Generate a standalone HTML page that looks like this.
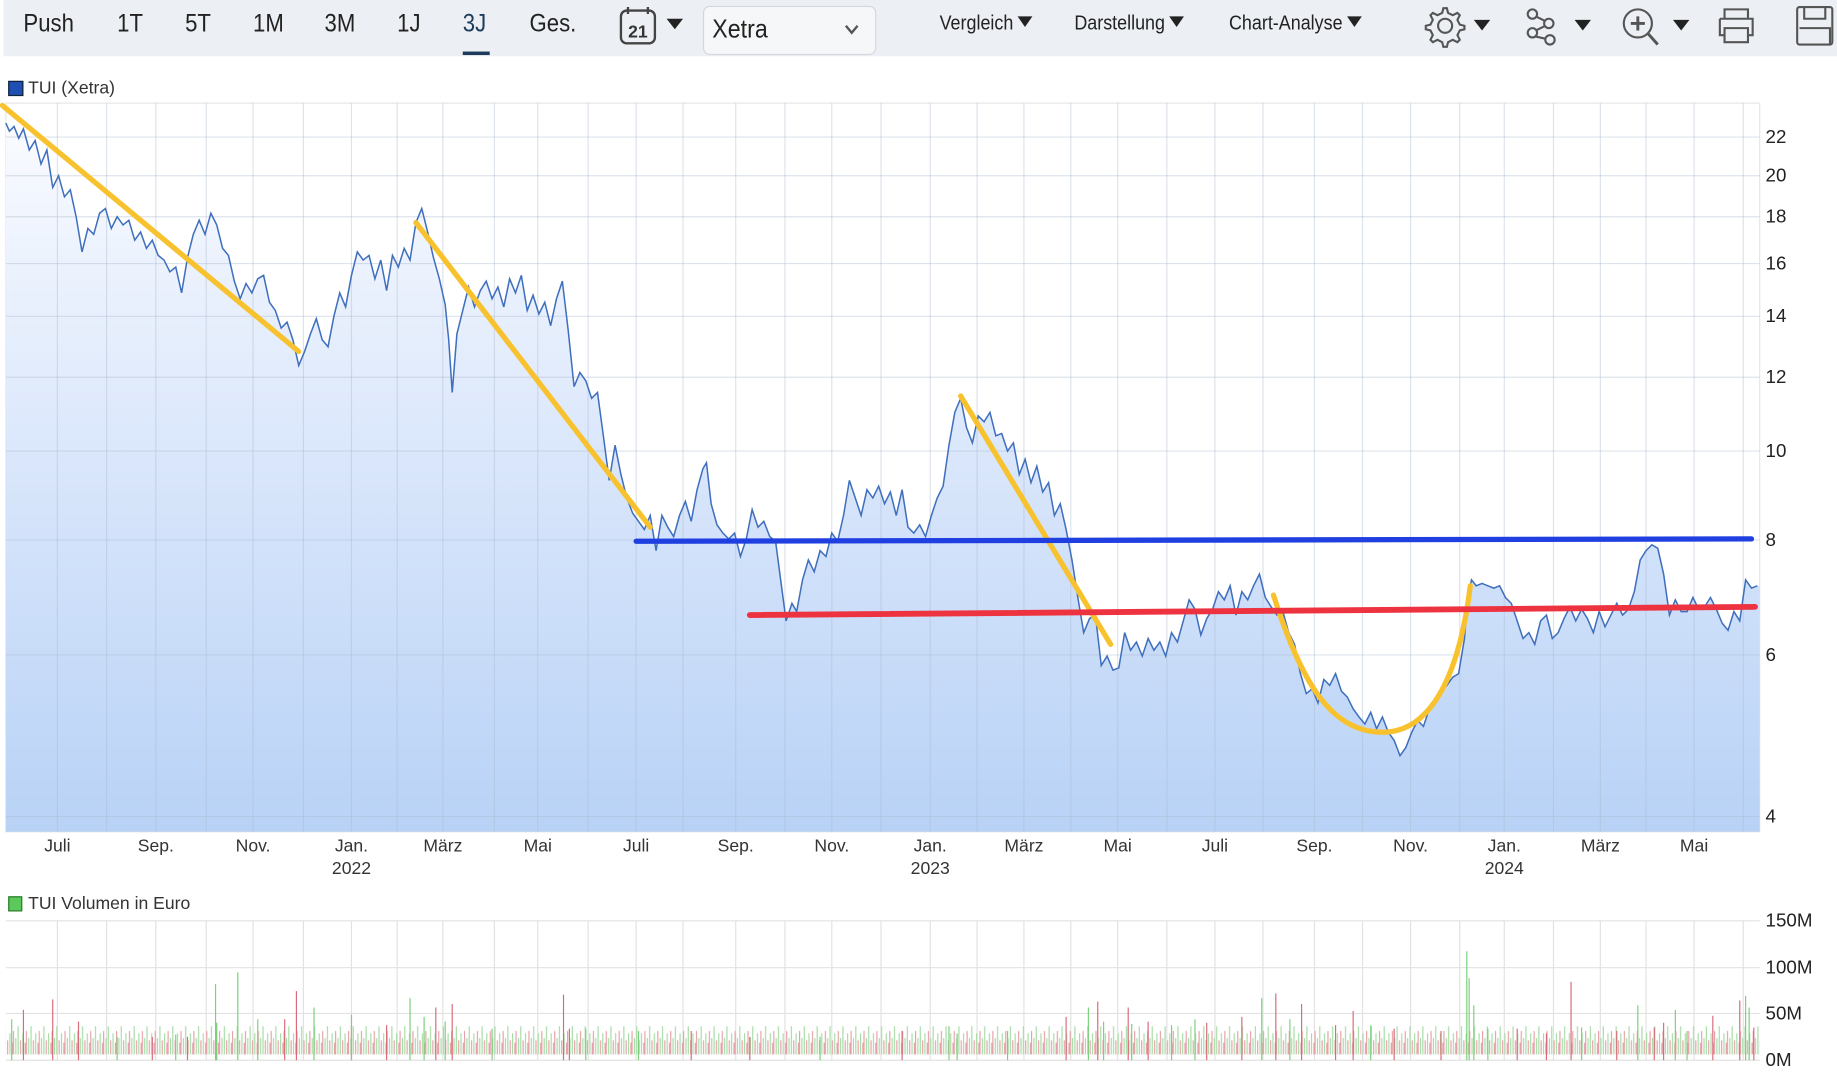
<!DOCTYPE html>
<html><head><meta charset="utf-8">
<style>
html,body{margin:0;padding:0;width:1837px;height:1075px;overflow:hidden;background:#fff;}
#w{position:absolute;left:0;top:0;width:1568px;height:918px;transform:scale(1.17156);transform-origin:0 0;font-family:"Liberation Sans",sans-serif;color:#222;}
.tb{position:absolute;left:3px;top:0;width:1565px;height:48px;background:#eceff3;}
.t{position:absolute;top:9px;font-size:21px;color:#222;font-family:"Liberation Sans",sans-serif;transform:scaleX(.9);transform-origin:0 0;}
.m{position:absolute;top:10px;font-size:17px;color:#222;transform:scaleX(.9);transform-origin:0 0;}
.tri{display:inline-block;width:0;height:0;border-left:7px solid transparent;border-right:7px solid transparent;border-top:9px solid #222;margin-left:4px;vertical-align:2px;}
.lab{position:absolute;font-size:15px;color:#333;}
.xl{position:absolute;top:713px;font-size:15px;color:#333;transform:translateX(-50%);text-align:center;line-height:19px;}
.yl{position:absolute;left:1507px;font-size:16px;color:#222;}
</style></head><body><div id="w">
<div class="tb"></div>
<div class="t" style="left:20px">Push</div>
<div class="t" style="left:100px">1T</div>
<div class="t" style="left:158px">5T</div>
<div class="t" style="left:216px">1M</div>
<div class="t" style="left:277px">3M</div>
<div class="t" style="left:339px">1J</div>
<div class="t" style="left:395px;color:#1d3c5c">3J</div>
<div style="position:absolute;left:395px;top:44px;width:23px;height:3px;background:#1d3c5c"></div>
<div class="t" style="left:452px">Ges.</div>
<svg style="position:absolute;left:526px;top:4px" width="62" height="36" viewBox="0 0 62 36">
<rect x="4" y="5" width="29" height="28" rx="5" fill="none" stroke="#444" stroke-width="2"/>
<line x1="10" y1="2" x2="10" y2="8" stroke="#444" stroke-width="2"/><line x1="27" y1="2" x2="27" y2="8" stroke="#444" stroke-width="2"/>
<text x="18.5" y="28" font-size="15" font-weight="bold" text-anchor="middle" fill="#333" font-family="Liberation Sans">21</text>
<path d="M43 12 L57 12 L50 21Z" fill="#222"/></svg>
<div style="position:absolute;left:600px;top:5px;width:146px;height:40px;background:#f6f7f9;border:1px solid #d4d7dc;border-radius:6px;"></div>
<div style="position:absolute;left:608px;top:12px;font-size:22px;color:#222;transform:scaleX(.9);transform-origin:0 0">Xetra</div>
<svg style="position:absolute;left:720px;top:20px" width="14" height="10"><path d="M2 2 L7 8 L12 2" fill="none" stroke="#555" stroke-width="2"/></svg>
<div class="m" style="left:802px">Vergleich<span class="tri"></span></div>
<div class="m" style="left:917px">Darstellung<span class="tri"></span></div>
<div class="m" style="left:1049px">Chart-Analyse<span class="tri"></span></div>
<svg style="position:absolute;left:1212px;top:2px" width="356" height="40" viewBox="0 0 356 40">
<g fill="none" stroke="#555" stroke-width="1.8">
<path d="M20 5 l3 0 1 4 4 2 4-2 2 2-2 4 2 4 4 1 0 3-4 1-2 4 2 4-2 2-4-2-4 2-1 4-3 0-1-4-4-2-4 2-2-2 2-4-2-4-4-1 0-3 4-1 2-4-2-4 2-2 4 2 4-2z"/>
<circle cx="21.5" cy="20" r="6"/>
<circle cx="96" cy="10" r="4"/><circle cx="96" cy="26" r="4"/><circle cx="110" cy="18" r="4"/><circle cx="111" cy="32" r="4"/>
<path d="M99 12 L107 16 M99 24 L107 20 M98 29 L107 31"/>
<circle cx="186" cy="18" r="12"/><path d="M195 27 L203 36 M186 12 L186 24 M180 18 L192 18" stroke-width="2.5"/>
<path d="M260 14 V6 h20 v8 M256 14 h28 v14 h-4 M256 14 v14 h4 M260 22 h20 v12 h-20z"/>
<rect x="322" y="4" width="30" height="32" rx="2"/><path d="M328 4 v10 h18 v-10 M324 22 h26 v14"/>
</g>
<path d="M46 15 h14 l-7 9z M132 15 h14 l-7 9z M216 15 h14 l-7 9z" fill="#222"/>
</svg>

<div style="position:absolute;left:7px;top:69px;width:11px;height:11px;background:#1f4fb5;border:1px solid #123"></div>
<div class="lab" style="left:24px;top:67px">TUI (Xetra)</div>

<svg style="position:absolute;left:0;top:0" width="1568" height="918">
<defs>
<linearGradient id="g" x1="0" y1="88" x2="0" y2="710" gradientUnits="userSpaceOnUse">
<stop offset="0" stop-color="#fbfcff"/><stop offset="0.5" stop-color="#d9e6fb"/><stop offset="1" stop-color="#b8d2f6"/></linearGradient>
</defs>
<rect x="5" y="88" width="1497" height="622" fill="#fff" stroke="#e6e6e6"/>
<path id="p" d="M5,105 L8,112 L12,108 L16,118 L20,110 L25,128 L30,120 L35,140 L40,128 L45,160 L50,150 L55,168 L60,162 L65,185 L70,215 L75,195 L80,200 L85,182 L90,178 L95,195 L100,185 L105,192 L110,188 L115,205 L120,198 L125,212 L130,205 L135,218 L140,222 L145,232 L150,228 L155,250 L160,220 L165,200 L170,188 L175,200 L180,182 L185,192 L190,212 L195,218 L200,240 L205,255 L210,242 L215,250 L220,238 L225,235 L230,258 L235,265 L240,280 L245,275 L250,290 L255,312 L260,300 L265,285 L270,272 L275,290 L280,296 L285,270 L290,250 L295,262 L300,235 L305,215 L310,222 L315,218 L320,238 L325,222 L330,248 L335,218 L340,228 L345,212 L350,222 L355,190 L360,178 L365,198 L370,220 L375,238 L380,260 L383,290 L386,335 L390,285 L395,265 L400,245 L405,262 L410,248 L415,240 L420,255 L425,245 L430,262 L435,238 L440,250 L445,235 L450,265 L455,252 L460,268 L465,258 L470,278 L475,255 L480,240 L485,282 L490,330 L495,318 L500,325 L505,340 L510,335 L515,372 L520,410 L525,380 L530,405 L535,425 L540,438 L545,445 L550,452 L555,440 L560,470 L565,440 L570,450 L575,458 L580,440 L585,428 L590,445 L595,418 L600,400 L603,395 L607,430 L612,448 L617,455 L622,460 L627,455 L632,475 L637,460 L642,435 L647,450 L652,445 L657,458 L662,462 L667,500 L671,530 L676,515 L680,522 L685,495 L690,478 L695,488 L700,470 L705,475 L710,455 L715,462 L720,440 L725,410 L730,425 L735,440 L740,418 L745,425 L750,415 L755,430 L760,420 L765,440 L770,418 L775,450 L780,455 L785,448 L790,458 L795,440 L800,425 L805,415 L810,380 L815,352 L820,340 L825,365 L830,378 L835,355 L840,360 L845,352 L850,372 L855,370 L860,385 L865,378 L870,405 L875,392 L880,412 L885,398 L890,420 L895,412 L900,440 L905,430 L910,452 L915,478 L920,510 L925,540 L930,528 L935,525 L940,568 L945,560 L950,572 L955,570 L960,540 L965,555 L970,548 L975,560 L980,545 L985,555 L990,548 L995,560 L1000,540 L1005,548 L1010,530 L1015,512 L1020,520 L1025,542 L1030,528 L1035,520 L1040,505 L1045,512 L1050,500 L1055,525 L1060,505 L1065,512 L1070,500 L1075,490 L1080,510 L1085,518 L1090,525 L1095,522 L1100,540 L1105,550 L1110,575 L1115,592 L1120,588 L1125,600 L1130,580 L1135,585 L1140,575 L1145,590 L1150,595 L1155,605 L1160,612 L1165,618 L1170,608 L1175,622 L1180,612 L1185,625 L1190,632 L1195,645 L1200,638 L1205,625 L1210,615 L1215,620 L1220,605 L1225,600 L1230,590 L1235,585 L1240,578 L1245,575 L1250,545 L1253,510 L1256,495 L1260,500 L1265,498 L1270,500 L1275,502 L1280,500 L1285,510 L1290,515 L1295,530 L1300,545 L1305,540 L1310,550 L1315,530 L1320,525 L1325,545 L1330,540 L1335,528 L1340,518 L1345,530 L1350,520 L1355,528 L1360,540 L1365,522 L1370,535 L1375,525 L1380,515 L1385,525 L1390,520 L1395,505 L1400,478 L1405,470 L1410,465 L1415,468 L1420,490 L1425,525 L1430,512 L1435,522 L1440,522 L1445,510 L1450,520 L1455,518 L1460,510 L1465,520 L1470,532 L1475,538 L1480,522 L1485,530 L1490,495 L1495,502 L1500,500"
 fill="none"/>
<path d="M5,105 L8,112 L12,108 L16,118 L20,110 L25,128 L30,120 L35,140 L40,128 L45,160 L50,150 L55,168 L60,162 L65,185 L70,215 L75,195 L80,200 L85,182 L90,178 L95,195 L100,185 L105,192 L110,188 L115,205 L120,198 L125,212 L130,205 L135,218 L140,222 L145,232 L150,228 L155,250 L160,220 L165,200 L170,188 L175,200 L180,182 L185,192 L190,212 L195,218 L200,240 L205,255 L210,242 L215,250 L220,238 L225,235 L230,258 L235,265 L240,280 L245,275 L250,290 L255,312 L260,300 L265,285 L270,272 L275,290 L280,296 L285,270 L290,250 L295,262 L300,235 L305,215 L310,222 L315,218 L320,238 L325,222 L330,248 L335,218 L340,228 L345,212 L350,222 L355,190 L360,178 L365,198 L370,220 L375,238 L380,260 L383,290 L386,335 L390,285 L395,265 L400,245 L405,262 L410,248 L415,240 L420,255 L425,245 L430,262 L435,238 L440,250 L445,235 L450,265 L455,252 L460,268 L465,258 L470,278 L475,255 L480,240 L485,282 L490,330 L495,318 L500,325 L505,340 L510,335 L515,372 L520,410 L525,380 L530,405 L535,425 L540,438 L545,445 L550,452 L555,440 L560,470 L565,440 L570,450 L575,458 L580,440 L585,428 L590,445 L595,418 L600,400 L603,395 L607,430 L612,448 L617,455 L622,460 L627,455 L632,475 L637,460 L642,435 L647,450 L652,445 L657,458 L662,462 L667,500 L671,530 L676,515 L680,522 L685,495 L690,478 L695,488 L700,470 L705,475 L710,455 L715,462 L720,440 L725,410 L730,425 L735,440 L740,418 L745,425 L750,415 L755,430 L760,420 L765,440 L770,418 L775,450 L780,455 L785,448 L790,458 L795,440 L800,425 L805,415 L810,380 L815,352 L820,340 L825,365 L830,378 L835,355 L840,360 L845,352 L850,372 L855,370 L860,385 L865,378 L870,405 L875,392 L880,412 L885,398 L890,420 L895,412 L900,440 L905,430 L910,452 L915,478 L920,510 L925,540 L930,528 L935,525 L940,568 L945,560 L950,572 L955,570 L960,540 L965,555 L970,548 L975,560 L980,545 L985,555 L990,548 L995,560 L1000,540 L1005,548 L1010,530 L1015,512 L1020,520 L1025,542 L1030,528 L1035,520 L1040,505 L1045,512 L1050,500 L1055,525 L1060,505 L1065,512 L1070,500 L1075,490 L1080,510 L1085,518 L1090,525 L1095,522 L1100,540 L1105,550 L1110,575 L1115,592 L1120,588 L1125,600 L1130,580 L1135,585 L1140,575 L1145,590 L1150,595 L1155,605 L1160,612 L1165,618 L1170,608 L1175,622 L1180,612 L1185,625 L1190,632 L1195,645 L1200,638 L1205,625 L1210,615 L1215,620 L1220,605 L1225,600 L1230,590 L1235,585 L1240,578 L1245,575 L1250,545 L1253,510 L1256,495 L1260,500 L1265,498 L1270,500 L1275,502 L1280,500 L1285,510 L1290,515 L1295,530 L1300,545 L1305,540 L1310,550 L1315,530 L1320,525 L1325,545 L1330,540 L1335,528 L1340,518 L1345,530 L1350,520 L1355,528 L1360,540 L1365,522 L1370,535 L1375,525 L1380,515 L1385,525 L1390,520 L1395,505 L1400,478 L1405,470 L1410,465 L1415,468 L1420,490 L1425,525 L1430,512 L1435,522 L1440,522 L1445,510 L1450,520 L1455,518 L1460,510 L1465,520 L1470,532 L1475,538 L1480,522 L1485,530 L1490,495 L1495,502 L1500,500 L1502,500 L1502,710 L5,710 Z" fill="url(#g)"/>
<g stroke="#a9b8cc" stroke-opacity="0.4" stroke-width="1">
<path d="M49 88V710 M91 88V710 M133 88V710 M176 88V710 M216 88V710 M259 88V710 M300 88V710 M339 88V710 M378 88V710 M422 88V710 M459 88V710 M502 88V710 M543 88V710 M583 88V710 M628 88V710 M670 88V710 M710 88V710 M752 88V710 M794 88V710 M834 88V710 M874 88V710 M914 88V710 M954 88V710 M996 88V710 M1037 88V710 M1078 88V710 M1122 88V710 M1163 88V710 M1204 88V710 M1246 88V710 M1284 88V710 M1326 88V710 M1366 88V710 M1405 88V710 M1446 88V710 M1488 88V710"/>
<path d="M5 117H1502 M5 150H1502 M5 185H1502 M5 225H1502 M5 270H1502 M5 322H1502 M5 385H1502 M5 461H1502 M5 559H1502 M5 697H1502"/>
</g>
<use href="#p" stroke="#3f6fbd" stroke-width="1.3"/>
<g fill="none" stroke-linecap="round" stroke-width="4.5">
<path d="M2 90 L255 300 M355 190 L555 450 M820 338 L948 550" stroke="#f8c22f"/>
<path d="M1087 508 C1110 580 1135 625 1180 625 C1220 625 1245 580 1255 500" stroke="#f8c22f"/>
<path d="M543 462 L1495 460" stroke="#1f3fe0"/>
<path d="M640 525 L1498 518" stroke="#ee3340" stroke-width="5"/>
</g>
<!-- volume -->
<g stroke="#e2e2e2" stroke-width="1">
<path d="M5 786H1502 M5 826H1502 M5 865H1502 M5 905H1502"/>
<path d="M49 786V905 M91 786V905 M133 786V905 M176 786V905 M216 786V905 M259 786V905 M300 786V905 M339 786V905 M378 786V905 M422 786V905 M459 786V905 M502 786V905 M543 786V905 M583 786V905 M628 786V905 M670 786V905 M710 786V905 M752 786V905 M794 786V905 M834 786V905 M874 786V905 M914 786V905 M954 786V905 M996 786V905 M1037 786V905 M1078 786V905 M1122 786V905 M1163 786V905 M1204 786V905 M1246 786V905 M1284 786V905 M1326 786V905 M1366 786V905 M1405 786V905 M1446 786V905 M1488 786V905"/>
</g>
<defs><pattern id="vb" width="11" height="30" patternUnits="userSpaceOnUse">
<rect x="0" y="10" width="1" height="20" fill="#e8a0aa"/><rect x="2" y="16" width="1" height="14" fill="#a5dca5"/><rect x="4" y="6" width="1" height="24" fill="#a5dca5"/><rect x="6" y="18" width="1" height="12" fill="#e8a0aa"/><rect x="8" y="12" width="1" height="18" fill="#a5dca5"/><rect x="10" y="20" width="1" height="10" fill="#e8a0aa"/></pattern></defs>
<rect x="5" y="875" width="1497" height="30" fill="url(#vb)"/>
<g stroke-width="1">
<path stroke="#d86a7a" d="M20 862V905M45 853V905M67 872V905M243 870V905M253 846V905M372 860V905M386 857V905M481 849V905M486 878V905M770 880V905M910 868V905M937 855V905M963 860V905M1089 848V905M1111 857V905M1155 863V905M1295 878V905M1341 838V905M1412 877V905M1420 873V905M1462 867V905M1485 854V905M1497 877V905M130 885V905M160 885V905M300 875V905M330 875V905M590 880V905M640 885V905M980 872V905M1030 873V905M1060 868V905M1140 875V905M1190 878V905M1230 880V905M1320 882V905M1380 880V905"/>
<path stroke="#7ccf7c" d="M10 870V905M184 840V905M203 830V905M185 873V905M220 870V905M268 860V905M300 866V905M350 852V905M362 868V905M380 872V905M545 880V905M810 876V905M817 882V905M929 860V905M942 872V905M966 874V905M1077 852V905M1101 870V905M1252 812V905M1254 835V905M1258 858V905M1350 877V905M1398 858V905M1430 862V905M1490 850V905M1493 860V905M100 885V905M150 883V905M420 878V905M500 878V905M700 885V905M860 880V905M1000 875V905M1020 870V905M1170 875V905M1270 878V905M1440 880V905"/>
</g>
</svg>
<div class="yl" style="top:109px">22</div>
<div class="yl" style="top:142px">20</div>
<div class="yl" style="top:177px">18</div>
<div class="yl" style="top:217px">16</div>
<div class="yl" style="top:262px">14</div>
<div class="yl" style="top:314px">12</div>
<div class="yl" style="top:377px">10</div>
<div class="yl" style="top:453px">8</div>
<div class="yl" style="top:551px">6</div>
<div class="yl" style="top:689px">4</div>
<div class="xl" style="left:49px">Juli</div>
<div class="xl" style="left:133px">Sep.</div>
<div class="xl" style="left:216px">Nov.</div>
<div class="xl" style="left:300px">Jan.<br>2022</div>
<div class="xl" style="left:378px">März</div>
<div class="xl" style="left:459px">Mai</div>
<div class="xl" style="left:543px">Juli</div>
<div class="xl" style="left:628px">Sep.</div>
<div class="xl" style="left:710px">Nov.</div>
<div class="xl" style="left:794px">Jan.<br>2023</div>
<div class="xl" style="left:874px">März</div>
<div class="xl" style="left:954px">Mai</div>
<div class="xl" style="left:1037px">Juli</div>
<div class="xl" style="left:1122px">Sep.</div>
<div class="xl" style="left:1204px">Nov.</div>
<div class="xl" style="left:1284px">Jan.<br>2024</div>
<div class="xl" style="left:1366px">März</div>
<div class="xl" style="left:1446px">Mai</div>
<div style="position:absolute;left:7px;top:765px;width:10px;height:11px;background:#5cc95c;border:1px solid #2a7a2a"></div>
<div class="lab" style="left:24px;top:763px">TUI Volumen in Euro</div>
<div class="yl" style="top:778px">150M</div>
<div class="yl" style="top:818px">100M</div>
<div class="yl" style="top:857px">50M</div>
<div class="yl" style="top:897px">0M</div>
</div></body></html>
